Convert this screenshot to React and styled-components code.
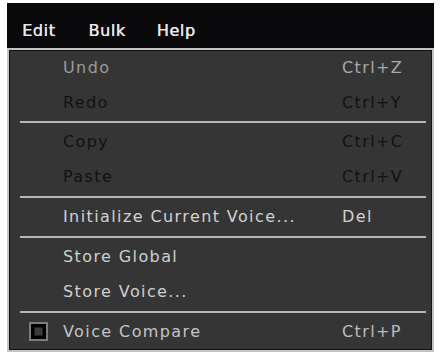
import React from "react";
import styled, { createGlobalStyle } from "styled-components";

const GlobalStyle = createGlobalStyle`
  html, body {
    margin: 0;
    padding: 0;
    background: #ffffff;
  }
  body {
    font-family: "DejaVu Sans", "Liberation Sans", sans-serif;
  }
`;

const Screen = styled.div`
  width: 427px;
  padding: 3px 6px 0 7px;
`;

const MenuBar = styled.div`
  display: flex;
  height: 45px;
  box-sizing: border-box;
  padding: 18px 0 7px 0;
  background: #0a0a0c;
`;

const BarItem = styled.div`
  padding: 0 15px;
  font-size: 16px;
  line-height: 20px;
  letter-spacing: 0.6px;
  color: #e8e8e8;
  text-shadow: 0.4px 0 0 #e8e8e8;
  margin-right: ${(p) => p.$gap || 0}px;
`;

const Dropdown = styled.div`
  border: 2px solid #c4c4c4;
  box-shadow: inset 0 0 0 1px #141414;
  background: #353535;
  padding-bottom: 1px;
`;

const Row = styled.div`
  display: grid;
  grid-template-columns: 54px 1fr 90px;
  align-items: center;
  height: 35px;
  font-size: 16px;
  line-height: 35px;
  letter-spacing: 1.4px;
  white-space: nowrap;
`;

const Label = styled.span`
  color: ${(p) => p.$color};
`;

const Shortcut = styled.span`
  color: ${(p) => p.$color};
`;

const Separator = styled.div`
  height: 2px;
  margin: ${(p) => p.$top || 2}px 6px 1px 11px;
  background: #b6b6b6;
`;

const CheckBox = styled.span`
  justify-self: end;
  margin-right: 15px;
  width: 19px;
  height: 19px;
  box-sizing: border-box;
  border: 2px solid #7c7c7c;
  background: #000;
  display: flex;
  align-items: center;
  justify-content: center;

  &::after {
    content: "";
    width: 7px;
    height: 7px;
    background: #3a3a3a;
    border: 1px solid #1e1e1e;
  }
`;

const groups = [
  [
    { label: "Undo", key: "Ctrl+Z", color: "#9c9c9c", keyColor: "#a9a9a9" },
    { label: "Redo", key: "Ctrl+Y", color: "#111111", keyColor: "#111111" },
  ],
  [
    { label: "Copy", key: "Ctrl+C", color: "#111111", keyColor: "#111111" },
    { label: "Paste", key: "Ctrl+V", color: "#111111", keyColor: "#111111" },
  ],
  [
    { label: "Initialize Current Voice...", key: "Del", color: "#d2d2d2", keyColor: "#d2d2d2" },
  ],
  [
    { label: "Store Global", color: "#cfcfcf" },
    { label: "Store Voice...", color: "#cfcfcf" },
  ],
  [
    { label: "Voice Compare", key: "Ctrl+P", color: "#c4c4c4", keyColor: "#bdbdbd", check: true },
  ],
];

const App = () => {
  return (
    <Screen>
      <GlobalStyle />
      <MenuBar>
        <BarItem $gap={3}>Edit</BarItem>
        <BarItem $gap={1}>Bulk</BarItem>
        <BarItem>Help</BarItem>
      </MenuBar>
      <Dropdown>
        {groups.map((group, gi) => (
          <React.Fragment key={gi}>
            {gi > 0 && <Separator $top={gi === 1 ? 1 : 2} />}
            {group.map((item) => (
              <Row key={item.label}>
                {item.check ? <CheckBox /> : <span />}
                <Label $color={item.color}>{item.label}</Label>
                <Shortcut $color={item.keyColor}>{item.key}</Shortcut>
              </Row>
            ))}
          </React.Fragment>
        ))}
      </Dropdown>
    </Screen>
  );
};

export default App;
